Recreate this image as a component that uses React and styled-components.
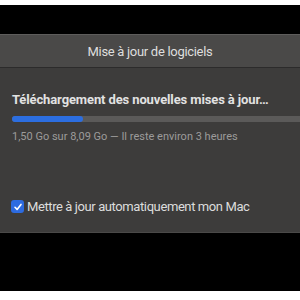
import React from "react";
import styled, { createGlobalStyle } from "styled-components";

const Global = createGlobalStyle`
  html, body { margin: 0; padding: 0; background: #000; }
  body { width: 300px; height: 300px; overflow: hidden; font-family: Roboto, "Noto Sans", sans-serif; }
`;

const Page = styled.div`
  width: 300px;
  height: 300px;
  display: flex;
  flex-direction: column;
  background: #000;
`;

const Edge = styled.div`
  height: ${(p) => p.$h}px;
  flex: none;
  background: #fff;
`;

const Backdrop = styled.div`
  flex: 1;
  min-height: 0;
  display: flex;
  flex-direction: column;
  padding-top: 29px;
`;

const Window = styled.div`
  display: flex;
  flex-direction: column;
  background: #3d3c3b;
  height: 198px;
  border-bottom: 1px solid #4a4948;
`;

const TitleBar = styled.div`
  height: 32px;
  flex: none;
  display: flex;
  align-items: center;
  justify-content: center;
  background: #4a4948;
  border-top: 1px solid #5e5d5c;
  border-bottom: 1px solid #2c2b2b;
  color: #dedede;
  font-size: 13px;
  letter-spacing: -0.3px;
`;

const Body = styled.div`
  display: flex;
  flex-direction: column;
  padding: 24px 0 0 12px;
`;

const Heading = styled.div`
  color: #e2e2e2;
  font-size: 13px;
  font-weight: 700;
  line-height: 16px;
  letter-spacing: -0.12px;
`;

const Track = styled.div`
  margin-top: 8px;
  height: 6px;
  background: #5b5a59;
  border-radius: 3px 0 0 3px;
  display: flex;
`;

const Fill = styled.div`
  background: #2c6ee0;
  border-radius: 3px;
  height: 100%;
`;

const Status = styled.div`
  margin-top: 8px;
  color: #9c9b9a;
  font-size: 11px;
  line-height: 14px;
`;

const CheckRow = styled.label`
  margin-top: 55px;
  display: flex;
  align-items: center;
  gap: 3px;
  margin-left: -1px;
  color: #dcdcdc;
  font-size: 13px;
  letter-spacing: -0.4px;
`;

const Box = styled.span`
  width: 13px;
  height: 13px;
  border-radius: 3px;
  background: #2d6be0;
  display: flex;
  align-items: center;
  justify-content: center;
`;

export default function App() {
  return (
    <>
      <Global />
      <Page>
        <Edge $h={5} />
        <Backdrop>
          <Window>
            <TitleBar>Mise à jour de logiciels</TitleBar>
            <Body>
              <Heading>Téléchargement des nouvelles mises à jour…</Heading>
              <Track>
                <Fill style={{ width: `${(71 / 288) * 100}%` }} />
              </Track>
              <Status>1,50 Go sur 8,09 Go — Il reste environ 3 heures</Status>
              <CheckRow>
                <Box>
                  <svg width="10" height="10" viewBox="0 0 10 10">
                    <path d="M2 5.3 L4.1 7.4 L8 2.4" fill="none" stroke="#fff" strokeWidth="1.6" strokeLinecap="round" strokeLinejoin="round" />
                  </svg>
                </Box>
                Mettre à jour automatiquement mon Mac
              </CheckRow>
            </Body>
          </Window>
        </Backdrop>
        <Edge $h={9} />
      </Page>
    </>
  );
}
